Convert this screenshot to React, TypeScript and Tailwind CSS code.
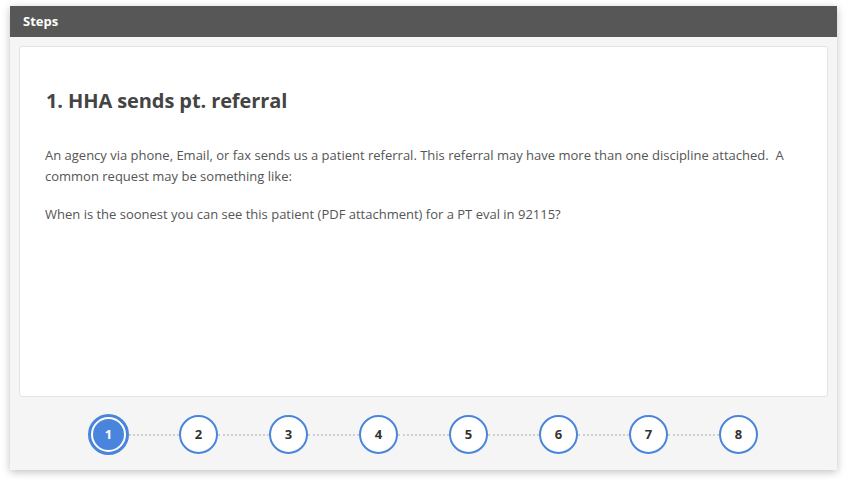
export default function App() {
    const steps = [1, 2, 3, 4, 5, 6, 7, 8];
    const current = 1;

    return (
        <div className="w-[847px] h-[484px] bg-white pt-[6px] pl-[10px] font-['Open_Sans',sans-serif]">
            <div className="w-[827px] h-[464px] bg-[#f5f5f5] shadow-[0_2px_8px_rgba(0,0,0,0.25)] flex flex-col">
                {/* Header */}
                <div className="h-[31px] bg-[#575757] flex items-center px-[13px]">
                    <span className="text-white text-[13px] font-bold">Steps</span>
                </div>

                {/* Step content card */}
                <div className="mx-[9px] mt-[9px] h-[351px] bg-white border border-[#e3e3e3] rounded-[3px] pl-[25px] pr-[26px] pt-[41px]">
                    <h2 className="text-[20px] font-bold text-[#444] leading-[26px] ml-[1px] tracking-[-0.1px]">1. HHA sends pt. referral</h2>
                    <p className="mt-[31px] text-[13px] leading-[21px] text-[#555] whitespace-pre-wrap">
                        {"An agency via phone, Email, or fax sends us a patient referral. This referral may have more than one discipline attached.  A common request may be something like:"}
                    </p>
                    <p className="mt-[17px] text-[13px] leading-[21px] text-[#555]">
                        When is the soonest you can see this patient (PDF attachment) for a PT eval in 92115?
                    </p>
                </div>

                {/* Stepper */}
                <div className="flex items-center pl-[78px] mt-[17px]">
                    {steps.map((n, idx) => (
                        <div key={n} className="flex items-center">
                            {n === current ? (
                                <div className="w-[41px] h-[41px] rounded-full border-[3px] border-[#4a85dd] bg-white p-[2px]">
                                    <div className="w-full h-full rounded-full bg-[#4a85dd] flex items-center justify-center text-white text-[13px] font-bold">
                                        {n}
                                    </div>
                                </div>
                            ) : (
                                <div className="w-[39px] h-[39px] rounded-full border-2 border-[#4a85dd] bg-white flex items-center justify-center text-[#333] text-[13px] font-bold">
                                    {n}
                                </div>
                            )}
                            {idx < steps.length - 1 && (
                                <div className={`${n === current ? "w-[50px]" : "w-[51px]"} border-t-2 border-dotted border-[#d0d0d0]`} />
                            )}
                        </div>
                    ))}
                </div>
            </div>
        </div>
    );
}
